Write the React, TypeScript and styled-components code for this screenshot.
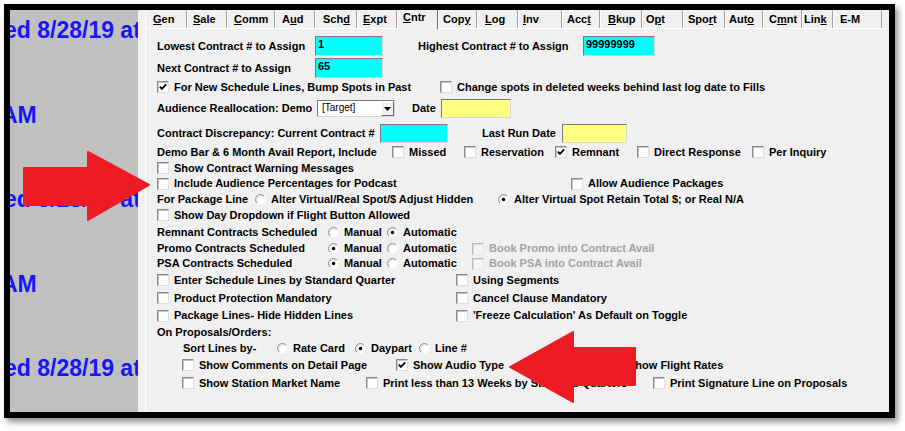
import React from "react";
import styled, { createGlobalStyle } from "styled-components";

const Global = createGlobalStyle`
  html, body { margin: 0; padding: 0; background: #fff; }
  body { font-family: "Liberation Sans", Arial, sans-serif; }
`;

const Page = styled.div`
  width: 905px;
  height: 431px;
  box-sizing: border-box;
  padding: 4px;
  overflow: hidden;
`;

const Frame = styled.div`
  position: relative;
  width: 891px;
  height: 414px;
  box-sizing: border-box;
  border: 6px solid #000;
  box-shadow: 3px 4px 6px rgba(0, 0, 0, 0.45);
  display: flex;
`;

const Backdrop = styled.div`
  width: 128px;
  flex-shrink: 0;
  background: #c0c0c0;
  overflow: hidden;
  display: flex;
  flex-direction: column;
  gap: 60.5px;
  padding-top: 8px;
  box-sizing: border-box;
`;

const BigText = styled.div<{ $shift: number }>`
  font: bold 23px/24px "Liberation Sans", Arial, sans-serif;
  color: #1616f6;
  white-space: nowrap;
  margin-left: ${(p) => p.$shift}px;
`;

const Panel = styled.div`
  flex: 1;
  background: #f0f0f0;
  padding: 0 3px 0 7px;
  display: flex;
  flex-direction: column;
  min-width: 0;
`;

const TabStrip = styled.div`
  display: flex;
  height: 18px;
  align-items: flex-end;
  position: relative;
  z-index: 1;
`;

const Tab = styled.div<{ $w: number; $pad: number; $active?: boolean }>`
  width: ${(p) => p.$w}px;
  height: ${(p) => (p.$active ? 19 : 18)}px;
  margin-bottom: ${(p) => (p.$active ? -1 : 0)}px;
  box-sizing: border-box;
  flex-shrink: 0;
  padding-left: ${(p) => p.$pad}px;
  padding-top: ${(p) => (p.$active ? 1 : 3)}px;
  background: #f0f0f0;
  border-left: 1px solid #ffffff;
  border-right: 1px solid ${(p) => (p.$active ? "#6a6a6a" : "#a0a0a0")};
  font: bold 11px/13px "Liberation Sans", Arial, sans-serif;
  color: #000;
  white-space: nowrap;
  u { text-decoration: underline; text-underline-offset: 1px; }
`;

const Content = styled.div`
  flex: 1;
  border-top: 1px solid #ffffff;
  border-left: 1px solid #ffffff;
  padding: 6px 0 0 11px;
  display: flex;
  flex-direction: column;
`;

const Row = styled.div<{ $h: number; $indent?: number }>`
  display: flex;
  align-items: center;
  height: ${(p) => p.$h}px;
  padding-left: ${(p) => p.$indent ?? 0}px;
  flex-shrink: 0;
`;

const Label = styled.span<{ $w?: number; $disabled?: boolean }>`
  font: bold 11px/13px "Liberation Sans", Arial, sans-serif;
  color: ${(p) => (p.$disabled ? "#a3a3a3" : "#000")};
  white-space: nowrap;
  flex-shrink: 0;
  width: ${(p) => (p.$w ? `${p.$w}px` : "auto")};
`;

const Gap = styled.span<{ $w: number }>`
  width: ${(p) => p.$w}px;
  flex-shrink: 0;
`;

const Item = styled.div<{ $w?: number }>`
  display: flex;
  align-items: center;
  gap: 5px;
  flex-shrink: 0;
  width: ${(p) => (p.$w ? `${p.$w}px` : "auto")};
`;

const Box = styled.span<{ $disabled?: boolean }>`
  width: 12px;
  height: 12px;
  box-sizing: border-box;
  flex-shrink: 0;
  background: ${(p) => (p.$disabled ? "#f4f4f4" : "#fff")};
  border: 1px solid;
  border-color: ${(p) =>
    p.$disabled ? "#b8b8b8 #e8e8e8 #e8e8e8 #b8b8b8" : "#8a8a8a #dedede #dedede #8a8a8a"};
  box-shadow: inset 1px 1px 0 ${(p) => (p.$disabled ? "#dcdcdc" : "#c4c4c4")};
  display: flex;
  align-items: center;
  justify-content: center;
`;

const RadioMark = styled.svg`
  width: 11px;
  height: 11px;
  flex-shrink: 0;
`;

const TextBox = styled.div<{ $w: number; $h: number; $bg: string }>`
  width: ${(p) => p.$w}px;
  height: ${(p) => p.$h}px;
  box-sizing: border-box;
  flex-shrink: 0;
  background: ${(p) => p.$bg};
  border: 1px solid;
  border-color: #7a7a7a #d8d8d8 #d8d8d8 #7a7a7a;
  font: bold 11px/13px "Liberation Sans", Arial, sans-serif;
  color: #000;
  padding: 1px 0 0 2px;
`;

const Select = styled.div`
  width: 78px;
  height: 17px;
  box-sizing: border-box;
  flex-shrink: 0;
  background: #fff;
  border: 1px solid;
  border-color: #7a7a7a #d8d8d8 #d8d8d8 #7a7a7a;
  display: flex;
  align-items: stretch;
`;

const SelectText = styled.span`
  flex: 1;
  font: 10px/13px "Liberation Sans", Arial, sans-serif;
  color: #000;
  padding-left: 4px;
`;

const DropButton = styled.span`
  width: 13px;
  box-sizing: border-box;
  background: #f0f0f0;
  border: 1px solid;
  border-color: #ffffff #6a6a6a #6a6a6a #ffffff;
  display: flex;
  align-items: center;
  justify-content: center;
`;

const Overlay = styled.svg`
  position: absolute;
  left: 0;
  top: 0;
  width: 879px;
  height: 402px;
  pointer-events: none;
  z-index: 5;
`;

type TabDef = { label: string; u: number; w: number; pad: number; active?: boolean };

const tabs: TabDef[] = [
  { label: "Gen", u: 0, w: 42, pad: 7 },
  { label: "Sale", u: 0, w: 40, pad: 5 },
  { label: "Comm", u: 0, w: 48, pad: 6 },
  { label: "Aud", u: 1, w: 40, pad: 6 },
  { label: "Schd", u: 3, w: 42, pad: 7 },
  { label: "Expt", u: 0, w: 40, pad: 5 },
  { label: "Cntr", u: 0, w: 41, pad: 5, active: true },
  { label: "Copy", u: 3, w: 39, pad: 4 },
  { label: "Log", u: 0, w: 41, pad: 7 },
  { label: "Inv", u: 0, w: 44, pad: 4 },
  { label: "Acct", u: 3, w: 38, pad: 4 },
  { label: "Bkup", u: 0, w: 42, pad: 7 },
  { label: "Opt", u: 1, w: 41, pad: 3 },
  { label: "Sport", u: 3, w: 42, pad: 4 },
  { label: "Auto", u: 3, w: 38, pad: 3 },
  { label: "Cmnt", u: 1, w: 39, pad: 5 },
  { label: "Link", u: 3, w: 31, pad: 1 },
  { label: "E-M", u: -1, w: 49, pad: 6 },
];

function TabLabel({ label, u }: { label: string; u: number }) {
  if (u < 0) return <>{label}</>;
  return (
    <>
      {label.slice(0, u)}
      <u>{label[u]}</u>
      {label.slice(u + 1)}
    </>
  );
}

function Check({
  children,
  w,
  checked,
  disabled,
}: {
  children: React.ReactNode;
  w?: number;
  checked?: boolean;
  disabled?: boolean;
}) {
  return (
    <Item $w={w}>
      <Box $disabled={disabled}>
        {checked && (
          <svg width="10" height="10" viewBox="0 0 10 10">
            <path d="M1.8 4.6 L3.9 6.9 L8.2 2.3" stroke="#000" strokeWidth="1.7" fill="none" />
          </svg>
        )}
      </Box>
      <Label $disabled={disabled}>{children}</Label>
    </Item>
  );
}

function Radio({ children, w, checked }: { children: React.ReactNode; w?: number; checked?: boolean }) {
  return (
    <Item $w={w}>
      <RadioMark viewBox="0 0 12 12">
        <circle cx="6" cy="6" r="5.3" fill="#fff" />
        <path d="M2.1 9.9 A5.3 5.3 0 0 1 9.9 2.1" stroke="#8a8a8a" strokeWidth="1" fill="none" />
        <path d="M2.9 9.1 A4.3 4.3 0 0 1 9.1 2.9" stroke="#c8c8c8" strokeWidth="1" fill="none" />
        {checked && <circle cx="6" cy="6" r="1.9" fill="#000" />}
      </RadioMark>
      <Label>{children}</Label>
    </Item>
  );
}

export default function App() {
  return (
    <>
      <Global />
      <Page>
        <Frame>
          <Backdrop>
            <BigText $shift={-6}>ed 8/28/19 at</BigText>
            <BigText $shift={-9}>AM</BigText>
            <BigText $shift={-6}>ed 8/28/19 at</BigText>
            <BigText $shift={-9}>AM</BigText>
            <BigText $shift={-6}>ed 8/28/19 at</BigText>
          </Backdrop>
          <Panel>
            <TabStrip>
              {tabs.map((t) => (
                <Tab key={t.label} $w={t.w} $pad={t.pad} $active={t.active}>
                  <TabLabel label={t.label} u={t.u} />
                </Tab>
              ))}
            </TabStrip>
            <Content>
              <Row $h={22}>
                <Label $w={158}>Lowest Contract # to Assign</Label>
                <TextBox $w={68} $h={20} $bg="#00ffff">1</TextBox>
                <Gap $w={35} />
                <Label $w={165}>Highest Contract # to Assign</Label>
                <TextBox $w={72} $h={20} $bg="#00ffff">99999999</TextBox>
              </Row>
              <Row $h={22}>
                <Label $w={158}>Next Contract # to Assign</Label>
                <TextBox $w={68} $h={20} $bg="#00ffff">65</TextBox>
              </Row>
              <Row $h={16}>
                <Check w={283} checked>For New Schedule Lines, Bump Spots in Past</Check>
                <Check>Change spots in deleted weeks behind last log date to Fills</Check>
              </Row>
              <Row $h={27}>
                <Label $w={160}>Audience Reallocation: Demo</Label>
                <Select>
                  <SelectText>[Target]</SelectText>
                  <DropButton>
                    <svg width="7" height="4" viewBox="0 0 7 4">
                      <path d="M0 0 H7 L3.5 4 Z" fill="#000" />
                    </svg>
                  </DropButton>
                </Select>
                <Gap $w={17} />
                <Label $w={29}>Date</Label>
                <TextBox $w={70} $h={19} $bg="#ffff80" />
              </Row>
              <Row $h={22}>
                <Label $w={223}>Contract Discrepancy: Current Contract #</Label>
                <TextBox $w={68} $h={19} $bg="#00ffff" />
                <Gap $w={34} />
                <Label $w={80}>Last Run Date</Label>
                <TextBox $w={65} $h={19} $bg="#ffff80" />
              </Row>
              <Row $h={16}>
                <Label $w={235}>Demo Bar &amp; 6 Month Avail Report, Include</Label>
                <Check w={72}>Missed</Check>
                <Check w={91}>Reservation</Check>
                <Check w={82} checked>Remnant</Check>
                <Check w={115}>Direct Response</Check>
                <Check>Per Inquiry</Check>
              </Row>
              <Row $h={16}>
                <Check>Show Contract Warning Messages</Check>
              </Row>
              <Row $h={15}>
                <Check w={414}>Include Audience Percentages for Podcast</Check>
                <Check>Allow Audience Packages</Check>
              </Row>
              <Row $h={16}>
                <Label $w={98}>For Package Line</Label>
                <Radio w={243}>Alter Virtual/Real Spot/$ Adjust Hidden</Radio>
                <Radio checked>Alter Virtual Spot Retain Total $; or Real N/A</Radio>
              </Row>
              <Row $h={16}>
                <Check>Show Day Dropdown if Flight Button Allowed</Check>
              </Row>
              <Row $h={18}>
                <Label $w={171}>Remnant Contracts Scheduled</Label>
                <Radio w={59}>Manual</Radio>
                <Radio checked>Automatic</Radio>
              </Row>
              <Row $h={15}>
                <Label $w={171}>Promo Contracts Scheduled</Label>
                <Radio w={59} checked>Manual</Radio>
                <Radio w={85}>Automatic</Radio>
                <Check disabled>Book Promo into Contract Avail</Check>
              </Row>
              <Row $h={15}>
                <Label $w={171}>PSA Contracts Scheduled</Label>
                <Radio w={59} checked>Manual</Radio>
                <Radio w={85}>Automatic</Radio>
                <Check disabled>Book PSA into Contract Avail</Check>
              </Row>
              <Row $h={18}>
                <Check w={299}>Enter Schedule Lines by Standard Quarter</Check>
                <Check>Using Segments</Check>
              </Row>
              <Row $h={18}>
                <Check w={299}>Product Protection Mandatory</Check>
                <Check>Cancel Clause Mandatory</Check>
              </Row>
              <Row $h={17}>
                <Check w={299}>Package Lines- Hide Hidden Lines</Check>
                <Check>'Freeze Calculation' As Default on Toggle</Check>
              </Row>
              <Row $h={17}>
                <Label>On Proposals/Orders:</Label>
              </Row>
              <Row $h={15} $indent={26}>
                <Label $w={94}>Sort Lines by-</Label>
                <Radio w={78}>Rate Card</Radio>
                <Radio w={64} checked>Daypart</Radio>
                <Radio>Line #</Radio>
              </Row>
              <Row $h={18} $indent={25}>
                <Check w={214}>Show Comments on Detail Page</Check>
                <Check w={215} checked>Show Audio Type</Check>
                <Check>Show Flight Rates</Check>
              </Row>
              <Row $h={18} $indent={25}>
                <Check w={184}>Show Station Market Name</Check>
                <Check w={287}>Print less than 13 Weeks by Standard Quarters</Check>
                <Check>Print Signature Line on Proposals</Check>
              </Row>
            </Content>
          </Panel>
          <Overlay viewBox="10 10 879 402">
            <polygon
              points="24,168 88,168 88,152 149,185 88,220 88,205 24,205"
              fill="#ed1c24"
              stroke="#ed1c24"
              strokeWidth="2"
              strokeLinejoin="round"
            />
            <polygon
              points="510,367 573,332 573,348 635,348 635,385 573,385 573,402"
              fill="#ed1c24"
              stroke="#ed1c24"
              strokeWidth="2"
              strokeLinejoin="round"
            />
          </Overlay>
        </Frame>
      </Page>
    </>
  );
}
